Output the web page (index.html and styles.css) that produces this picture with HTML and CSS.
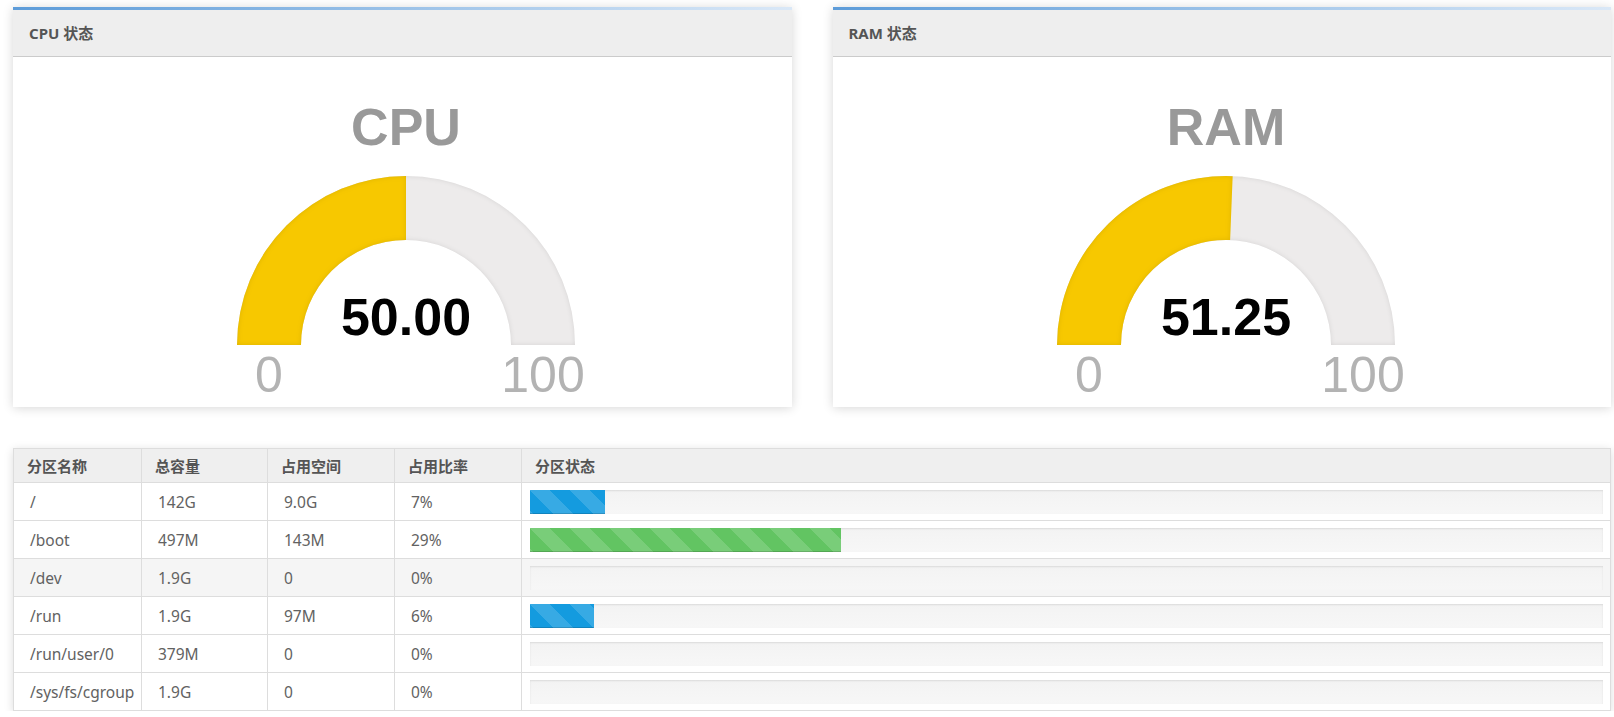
FILE: index.html
```html
<!DOCTYPE html>
<html lang="zh-CN">
<head>
<meta charset="utf-8">
<title>系统状态</title>
<link rel="stylesheet" href="styles.css">
</head>
<body>
<div class="page">
  <div class="gauges">
    <section class="card">
      <header class="card-head">CPU 状态</header>
      <div class="card-body">
        <svg class="gauge" width="420" height="350" viewBox="0 0 420 350">
          <defs>
            <filter id="inner1" x="-10%" y="-10%" width="120%" height="120%">
              <feFlood flood-color="#000" flood-opacity="0.22"/>
              <feComposite in2="SourceAlpha" operator="out"/>
              <feGaussianBlur stdDeviation="2.5"/>
              <feComposite in2="SourceAlpha" operator="in" result="shadow"/>
              <feMerge><feMergeNode in="SourceGraphic"/><feMergeNode in="shadow"/></feMerge>
            </filter>
          </defs>
          <text class="g-title" x="210" y="88">CPU</text>
          <path class="g-bg" filter="url(#inner1)" d="M41 288 A169 169 0 0 1 379 288 L315 288 A105 105 0 0 0 105 288 Z"/>
          <path class="g-level" filter="url(#inner1)" d="M41 288 A169 169 0 0 1 210 119 L210 183 A105 105 0 0 0 105 288 Z"/>
          <text class="g-value" x="210" y="277.5">50.00</text>
          <text class="g-label" x="73" y="334.5">0</text>
          <text class="g-label" x="347" y="334.5">100</text>
        </svg>
      </div>
    </section>
    <section class="card">
      <header class="card-head">RAM 状态</header>
      <div class="card-body">
        <svg class="gauge" width="420" height="350" viewBox="0 0 420 350">
          <defs>
            <filter id="inner2" x="-10%" y="-10%" width="120%" height="120%">
              <feFlood flood-color="#000" flood-opacity="0.22"/>
              <feComposite in2="SourceAlpha" operator="out"/>
              <feGaussianBlur stdDeviation="2.5"/>
              <feComposite in2="SourceAlpha" operator="in" result="shadow"/>
              <feMerge><feMergeNode in="SourceGraphic"/><feMergeNode in="shadow"/></feMerge>
            </filter>
          </defs>
          <text class="g-title" x="210" y="88">RAM</text>
          <path class="g-bg" filter="url(#inner2)" d="M41 288 A169 169 0 0 1 379 288 L315 288 A105 105 0 0 0 105 288 Z"/>
          <path class="g-level" filter="url(#inner2)" d="M41 288 A169 169 0 0 1 216.64 119.13 L214.12 183.08 A105 105 0 0 0 105 288 Z"/>
          <text class="g-value" x="210" y="277.5">51.25</text>
          <text class="g-label" x="73" y="334.5">0</text>
          <text class="g-label" x="347" y="334.5">100</text>
        </svg>
      </div>
    </section>
  </div>

  <table class="disk">
    <colgroup>
      <col class="c1"><col class="c2"><col class="c3"><col class="c4"><col>
    </colgroup>
    <thead>
      <tr><th>分区名称</th><th>总容量</th><th>占用空间</th><th>占用比率</th><th>分区状态</th></tr>
    </thead>
    <tbody>
      <tr><td>/</td><td>142G</td><td>9.0G</td><td>7%</td><td><div class="progress"><div class="bar bar-blue" style="width:7%"></div></div></td></tr>
      <tr><td>/boot</td><td>497M</td><td>143M</td><td>29%</td><td><div class="progress"><div class="bar bar-green" style="width:29%"></div></div></td></tr>
      <tr class="hl"><td>/dev</td><td>1.9G</td><td>0</td><td>0%</td><td><div class="progress"><div class="bar bar-blue" style="width:0%"></div></div></td></tr>
      <tr><td>/run</td><td>1.9G</td><td>97M</td><td>6%</td><td><div class="progress"><div class="bar bar-blue" style="width:6%"></div></div></td></tr>
      <tr><td>/run/user/0</td><td>379M</td><td>0</td><td>0%</td><td><div class="progress"><div class="bar bar-blue" style="width:0%"></div></div></td></tr>
      <tr><td>/sys/fs/cgroup</td><td>1.9G</td><td>0</td><td>0%</td><td><div class="progress"><div class="bar bar-blue" style="width:0%"></div></div></td></tr>
    </tbody>
  </table>
</div>
</body>
</html>
```
FILE: styles.css
```css
html, body {
  margin: 0;
  padding: 0;
  background: #fff;
}
body {
  font-family: "Noto Sans", "Noto Sans CJK SC", sans-serif;
  color: #555;
}
.page {
  padding: 7px 3px 0 13px;
}
.gauges {
  display: grid;
  grid-template-columns: 1fr 1fr;
  column-gap: 41px;
}
.card {
  background: #fff;
  border-top: 3px solid #6aa3dc;
  border-image: linear-gradient(to right, #5d9cd9, #dae8f7) 1;
  box-shadow: 0 1px 10px rgba(0, 0, 0, 0.16);
}
.card-head {
  height: 46px;
  line-height: 46px;
  padding-left: 16px;
  background: #eee;
  border-bottom: 1px solid #cbcbcb;
  font-size: 15px;
  font-weight: bold;
  color: #555;
}
.card-body {
  height: 350px;
  display: flex;
  justify-content: center;
  padding-left: 8px;
}
.gauge {
  display: block;
  font-family: "Liberation Sans", Arial, sans-serif;
}
.g-title {
  font-size: 52px;
  font-weight: bold;
  fill: #999;
  text-anchor: middle;
}
.g-value {
  font-size: 52px;
  font-weight: bold;
  fill: #010101;
  text-anchor: middle;
}
.g-label {
  font-size: 50px;
  fill: #b3b3b3;
  text-anchor: middle;
}
.g-bg {
  fill: #edebeb;
}
.g-level {
  fill: #f7c800;
}

.disk {
  margin-top: 41px;
  width: 100%;
  border-collapse: collapse;
  table-layout: fixed;
  border: 1px solid #ddd;
  box-shadow: 0 2px 9px rgba(0, 0, 0, 0.14);
  background: #fff;
}
.c1 { width: 128px; }
.c2 { width: 126px; }
.c3 { width: 127px; }
.c4 { width: 127px; }
.disk th {
  height: 33px;
  padding: 0 13px;
  text-align: left;
  background: #efefef;
  border: 1px solid #ddd;
  font-size: 15px;
  font-weight: bold;
  color: #555;
}
.disk td {
  height: 37px;
  padding: 0 12px 0 16px;
  border: 1px solid #ddd;
  font-size: 15.5px;
  color: #626262;
  white-space: nowrap;
}
.disk td:last-child {
  padding: 0 7px 0 8px;
}
.disk tr.hl td {
  background: #f5f5f5;
}
.progress {
  height: 24px;
  background: linear-gradient(#f3f3f3, #f7f7f7);
  box-shadow: inset 0 1px 2px rgba(0, 0, 0, 0.1);
  overflow: hidden;
}
.bar {
  height: 100%;
  box-shadow: inset 0 -1px 0 rgba(0, 0, 0, 0.15);
  background-size: 40px 40px;
}
.bar-blue {
  background-color: #149bdf;
  background-image: linear-gradient(45deg, rgba(255,255,255,.15) 25%, transparent 25%, transparent 50%, rgba(255,255,255,.15) 50%, rgba(255,255,255,.15) 75%, transparent 75%, transparent);
}
.bar-green {
  background-color: #62c462;
  background-image: linear-gradient(45deg, rgba(255,255,255,.15) 25%, transparent 25%, transparent 50%, rgba(255,255,255,.15) 50%, rgba(255,255,255,.15) 75%, transparent 75%, transparent);
}
```
